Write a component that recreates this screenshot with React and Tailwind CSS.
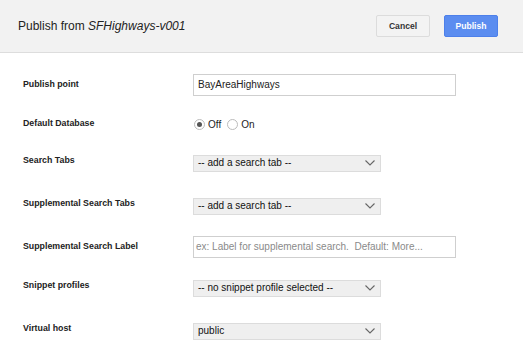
import React from "react";

const font = { fontFamily: '"Liberation Sans", Arial, sans-serif' };

function Chevron() {
  return (
    <svg width="10" height="6" viewBox="0 0 10 6" className="shrink-0">
      <polyline points="0.5,0.5 5,5 9.5,0.5" fill="none" stroke="#666" strokeWidth="1.1" />
    </svg>
  );
}

function Select({ text }) {
  return (
    <div className="flex h-[17px] w-[188px] items-center justify-between border border-[#dcdcdc] bg-[#efefef] pl-[4px] pr-[5px] text-[10px] leading-none text-[#111]">
      <span>{text}</span>
      <Chevron />
    </div>
  );
}

function Row({ h, label, children, up }) {
  return (
    <div className="flex items-center" style={{ height: h }}>
      <div className={`w-[193px] shrink-0 pl-[23px] text-[8.8px] font-bold text-[#222] ${up ? "-mt-[5px]" : ""}`}>
        {label}
      </div>
      {children}
    </div>
  );
}

export default function App() {
  return (
    <div className="h-[363px] w-[523px] overflow-hidden bg-white" style={font}>
      <div className="flex h-[53px] items-center justify-between border-b border-[#dddddd] bg-[#f2f2f2] pl-[18px] pr-[25px]">
        <div className="text-[12px] text-[#222]">
          Publish from <i>SFHighways-v001</i>
        </div>
        <div className="flex gap-[14px]">
          <button className="flex h-[22px] w-[54px] items-center justify-center rounded-[2px] border border-[#dcdcdc] bg-[#f3f3f3] text-[8.6px] font-bold text-[#333]">
            Cancel
          </button>
          <button className="flex h-[22px] w-[54px] items-center justify-center rounded-[2px] border border-[#4d80ea] bg-[#5b8df0] text-[8.6px] font-bold text-white">
            Publish
          </button>
        </div>
      </div>
      <div className="pt-[12px]">
        <Row h={39} label="Publish point">
          <div className="flex h-[22px] w-[263px] items-center border border-[#cfcfcf] bg-white pl-[4px] text-[10px] text-[#222]">
            BayAreaHighways
          </div>
        </Row>
        <Row h={40} label="Default Database">
          <div className="flex items-center text-[10px] text-[#222]">
            <span className="ml-[1px] flex h-[11px] w-[11px] items-center justify-center rounded-full border border-[#bbb] bg-white">
              <span className="h-[5px] w-[5px] rounded-full bg-[#555]" />
            </span>
            <span className="ml-[3px]">Off</span>
            <span className="ml-[6px] h-[11px] w-[11px] rounded-full border border-[#bbb] bg-white" />
            <span className="ml-[3px]">On</span>
          </div>
        </Row>
        <Row h={38} label="Search Tabs" up>
          <Select text="-- add a search tab --" />
        </Row>
        <Row h={48} label="Supplemental Search Tabs" up>
          <Select text="-- add a search tab --" />
        </Row>
        <Row h={33} label="Supplemental Search Label">
          <div className="flex h-[22px] w-[263px] items-center border border-[#cfcfcf] bg-white pl-[2px] text-[10px] whitespace-pre text-[#8a8a8a]">
            {"ex: Label for supplemental search.  Default: More..."}
          </div>
        </Row>
        <Row h={50} label="Snippet profiles" up>
          <Select text="-- no snippet profile selected --" />
        </Row>
        <Row h={36} label="Virtual host" up>
          <Select text="public" />
        </Row>
      </div>
    </div>
  );
}
